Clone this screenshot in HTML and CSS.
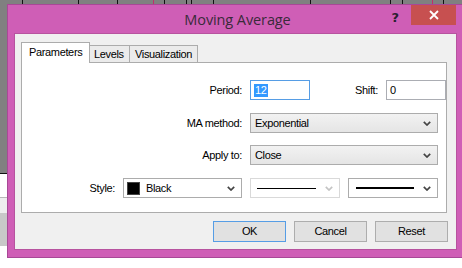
FILE: index.html
```html
<!DOCTYPE html>
<html>
<head>
<meta charset="utf-8">
<link rel="stylesheet" href="styles.css">
</head>
<body>
<div class="desktop">
  <div class="chart-top">
    <span class="tick" style="left:22px"></span>
    <span class="tick" style="left:78px"></span>
    <span class="tick" style="left:117px"></span>
    <span class="tick red" style="left:153px"></span>
    <span class="tick" style="left:164px"></span>
    <span class="tick" style="left:186px"></span>
    <span class="tick" style="left:191px"></span>
    <span class="tick" style="left:213px"></span>
    <span class="tick" style="left:310px"></span>
    <span class="tick" style="left:390px"></span>
    <span class="tick" style="left:402px"></span>
    <span class="tick red" style="left:432px"></span>
    <span class="tick" style="left:443px"></span>
  </div>
  <div class="chart-left">
    <div class="cl-gray"></div>
    <div class="cl-white"></div>
    <div class="cl-light"></div>
    <div class="cl-mid"></div>
  </div>

  <div class="dialog">
    <div class="titlebar">
      <div class="title">Moving Average</div>
      <div class="help">?</div>
      <div class="close">
        <svg width="10" height="10" viewBox="0 0 10 10"><path d="M1 1 L9 9 M9 1 L1 9" stroke="#fff" stroke-width="1.8"/></svg>
      </div>
    </div>
    <div class="client">
      <div class="tabs">
        <div class="tab active">Parameters</div>
        <div class="tab">Levels</div>
        <div class="tab">Visualization</div>
      </div>
      <div class="panel">
        <div class="row r1">
          <label class="lbl wide">Period:</label>
          <div class="input focus"><span class="sel">12</span></div>
          <label class="lbl shift">Shift:</label>
          <div class="input">0</div>
        </div>
        <div class="row r2">
          <label class="lbl wide">MA method:</label>
          <div class="select combo long"><span>Exponential</span>
            <svg class="chev" width="8" height="5" viewBox="0 0 8 5"><polyline points="0.8,0.8 4,4 7.2,0.8" fill="none" stroke="#444" stroke-width="1.7"/></svg>
          </div>
        </div>
        <div class="row r3">
          <label class="lbl wide">Apply to:</label>
          <div class="select combo long"><span>Close</span>
            <svg class="chev" width="8" height="5" viewBox="0 0 8 5"><polyline points="0.8,0.8 4,4 7.2,0.8" fill="none" stroke="#444" stroke-width="1.7"/></svg>
          </div>
        </div>
        <div class="row r4">
          <label class="lbl narrow">Style:</label>
          <div class="select white color"><span class="swatch"></span><span>Black</span>
            <svg class="chev" width="8" height="5" viewBox="0 0 8 5"><polyline points="0.8,0.8 4,4 7.2,0.8" fill="none" stroke="#444" stroke-width="1.7"/></svg>
          </div>
          <div class="select white line disabled"><span class="ln thin"></span>
            <svg class="chev" width="8" height="5" viewBox="0 0 8 5"><polyline points="0.8,0.8 4,4 7.2,0.8" fill="none" stroke="#c4c4c4" stroke-width="1.7"/></svg>
          </div>
          <div class="select white line"><span class="ln thick"></span>
            <svg class="chev" width="8" height="5" viewBox="0 0 8 5"><polyline points="0.8,0.8 4,4 7.2,0.8" fill="none" stroke="#444" stroke-width="1.7"/></svg>
          </div>
        </div>
      </div>
      <div class="buttons">
        <div class="btn default">OK</div>
        <div class="btn">Cancel</div>
        <div class="btn">Reset</div>
      </div>
    </div>
  </div>
</div>
</body>
</html>
```

FILE: styles.css
```css
html, body {
  margin: 0;
  padding: 0;
}
body {
  width: 462px;
  height: 268px;
  overflow: hidden;
  background: #ffffff;
  font-family: "Liberation Sans", Arial, sans-serif;
  font-size: 11px;
  color: #000;
}
.desktop {
  position: relative;
  width: 462px;
  height: 268px;
}
.chart-top {
  height: 4px;
  background: #808080;
  position: relative;
}
.tick {
  position: absolute;
  top: 0;
  width: 1px;
  height: 4px;
  background: #111;
}
.tick.red { background: #c0306a; }
.chart-left {
  width: 7px;
  display: flex;
  flex-direction: column;
}
.cl-gray { height: 169px; background: #808080; border-bottom: 1px solid #111; }
.cl-white { height: 23px; background: #fff; border-bottom: 1px solid #b8b8b8; }
.cl-light { height: 15px; background: #eeeeee; }
.cl-mid { height: 33px; background: #c8c8c8; }

.dialog {
  position: absolute;
  left: 7px;
  top: 4px;
  width: 456px;
  height: 254px;
  box-sizing: border-box;
  border: 1px solid #a84896;
  background: #cf5eb6;
  padding: 0 6px 8px 7px;
  display: flex;
  flex-direction: column;
}
.titlebar {
  height: 29px;
  position: relative;
  display: flex;
  align-items: flex-start;
}
.title {
  position: absolute;
  left: 0;
  right: 0;
  top: 5px;
  text-align: center;
  font-family: "Open Sans", "Noto Sans", sans-serif;
  font-size: 14.5px;
  color: #3a2a3a;
  letter-spacing: -0.1px;
  padding-left: 4px;
}
.help {
  position: absolute;
  right: 57px;
  top: 5px;
  font-family: "DejaVu Sans", sans-serif;
  font-weight: bold;
  font-size: 13px;
  color: #2a2030;
}
.close {
  position: absolute;
  right: 0;
  top: 0;
  width: 45px;
  height: 20px;
  background: #c75050;
  display: flex;
  align-items: center;
  justify-content: center;
}
.client {
  flex: 1;
  background: #f0f0f0;
  box-shadow: 0 0 0 1px #b7539f;
  padding: 8px 8px 7px 6px;
  display: flex;
  flex-direction: column;
  letter-spacing: -0.35px;
}
.tabs {
  display: flex;
  height: 20px;
  align-items: flex-end;
  position: relative;
  z-index: 1;
}
.tab {
  height: 17px;
  box-sizing: border-box;
  border: 1px solid #acacac;
  border-bottom: none;
  background: #ebebeb;
  padding: 0 5px;
  line-height: 16px;
  margin-left: -1px;
}
.tab.active {
  height: 21px;
  margin-bottom: -1px;
  margin-left: 0;
  background: #fff;
  width: 69px;
  padding: 0 0 0 7px;
  line-height: 19px;
}
.tab:nth-child(2) { width: 41px; padding-left: 4px; }
.tab:nth-child(3) { width: 69px; padding-left: 5px; }
.panel {
  width: 426px;
  height: 151px;
  box-sizing: border-box;
  border: 1px solid #acacac;
  background: #fff;
  padding-top: 17px;
  display: flex;
  flex-direction: column;
}
.row {
  display: flex;
  align-items: center;
  height: 20px;
  gap: 8px;
}
.r2 { margin-top: 13px; }
.r3 { margin-top: 12px; }
.r4 { margin-top: 13px; }
.lbl {
  text-align: right;
  color: #000;
}
.lbl.wide { width: 220px; }
.lbl.shift { width: 60px; }
.lbl.narrow { width: 93px; }
.input {
  width: 60px;
  height: 20px;
  box-sizing: border-box;
  border: 1px solid #abadb3;
  background: #fff;
  padding-left: 3px;
  line-height: 18px;
}
.input.focus { border-color: #569de5; }
.sel {
  background: #3399ff;
  color: #fff;
  display: inline-block;
  line-height: 13px;
  padding: 0 1px;
}
.select {
  height: 20px;
  box-sizing: border-box;
  border: 1px solid #acacac;
  display: flex;
  align-items: center;
  padding: 0 6px 0 4px;
  position: relative;
}
.select .chev { margin-left: auto; }
.combo {
  background: linear-gradient(#f2f2f2, #e5e5e5);
}
.long { width: 188px; }
.white { background: #fff; }
.color { width: 119px; padding-left: 3px; }
.swatch {
  width: 13px;
  height: 13px;
  box-sizing: border-box;
  background: #000;
  border: 1px solid #444;
  margin-right: 6px;
}
.line { width: 90px; padding-left: 6px; }
.line.disabled { border-color: #d9d9d9; }
.ln {
  width: 59px;
  background: #000;
}
.ln.thin { height: 1px; }
.ln.thick { height: 2px; width: 58px; margin-left: 1px; }
.buttons {
  margin-top: 8px;
  display: flex;
  justify-content: flex-end;
  gap: 8px;
}
.btn {
  width: 73px;
  height: 21px;
  box-sizing: border-box;
  border: 1px solid #adadad;
  background: #e1e1e1;
  text-align: center;
  line-height: 19px;
}
.btn.default { border-color: #569de5; }
```
